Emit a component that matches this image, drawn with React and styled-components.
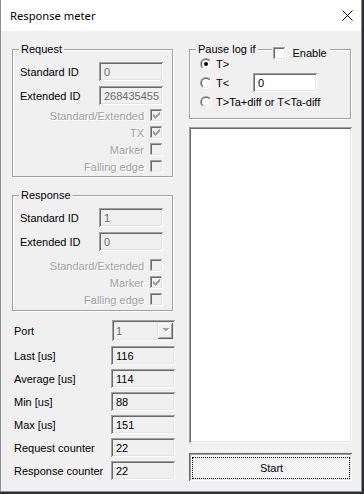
import React from 'react';
import styled, { createGlobalStyle } from 'styled-components';

const GlobalStyle = createGlobalStyle`
  html, body { margin: 0; padding: 0; background: #2e2f33; }
  body { font-family: "Liberation Sans", Arial, sans-serif; font-size: 11px; color: #000; }
  * { box-sizing: border-box; }
`;

const sunken = `
  box-shadow: inset 1px 1px 0 #a0a0a0, inset -1px -1px 0 #ffffff,
    inset 2px 2px 0 #696969, inset -2px -2px 0 #e3e3e3;
`;

const Window = styled.div`
  width: 362px;
  height: 492px;
  display: flex;
  flex-direction: column;
  border: 1px solid #8e8e8e;
  border-top: 0;
  background: #f0f0f0;
`;

const TitleBar = styled.div`
  height: 31px;
  flex: none;
  display: flex;
  align-items: center;
  justify-content: space-between;
  padding: 0 8px 0 9px;
  background: #fff;
  font-family: "Noto Sans", "Open Sans", sans-serif;
  font-size: 11.2px;
`;

const Client = styled.div`
  flex: 1;
  display: flex;
  gap: 14px;
  padding: 12px 9px 10px 11px;
`;

const Column = styled.div`
  width: 163px;
  display: flex;
  flex-direction: column;
`;

const GroupBox = styled.fieldset`
  margin: ${(p) => p.$mt || 0}px 0 0 0;
  min-width: 0;
  width: ${(p) => p.$w}px;
  padding: ${(p) => p.$pt}px ${(p) => p.$pr}px ${(p) => p.$pb}px ${(p) => p.$pl}px;
  border: 1px solid #a0a0a0;
  box-shadow: 1px 1px 0 #fff, inset 1px 1px 0 #fff;
`;

const Legend = styled.legend`
  padding: 0 2px;
  margin-left: ${(p) => p.$ml}px;
  line-height: 13px;
  background: #f0f0f0;
`;

const FieldRow = styled.div`
  display: flex;
  align-items: center;
  justify-content: space-between;
  height: 19px;
  & + & { margin-top: 5px; }
`;

const Edit = styled.div`
  width: ${(p) => p.$w || 64}px;
  height: 19px;
  flex: none;
  display: flex;
  align-items: center;
  padding: 0 4px 0 5px;
  background: ${(p) => (p.$white ? '#fff' : '#f0f0f0')};
  color: ${(p) => (p.$disabled ? '#6d6d6d' : '#000')};
  ${sunken}
`;

const Checks = styled.div`
  margin-top: ${(p) => p.$mt}px;
`;

const CheckRow = styled.div`
  display: flex;
  justify-content: flex-end;
  align-items: center;
  gap: 6px;
  height: 17px;
  color: #a0a0a0;
  text-shadow: 1px 1px 0 #fff;
`;

const BoxSvg = styled.svg`
  flex: none;
  display: block;
`;

const StatRow = styled.div`
  display: flex;
  align-items: center;
  justify-content: space-between;
  height: ${(p) => p.$h || 19}px;
  margin-top: ${(p) => p.$mt}px;
  padding-left: 2px;
`;

const Combo = styled.div`
  width: 63px;
  height: 21px;
  display: flex;
  align-items: center;
  justify-content: space-between;
  padding: 0 2px 0 4px;
  color: #6d6d6d;
  background: #f0f0f0;
  ${sunken}
`;

const DropButton = styled.div`
  width: 16px;
  height: 17px;
  display: flex;
  align-items: center;
  justify-content: center;
  background: #f0f0f0;
  box-shadow: inset 1px 1px 0 #e3e3e3, inset -1px -1px 0 #696969,
    inset 2px 2px 0 #fff, inset -2px -2px 0 #a0a0a0;
`;

const LegendInner = styled.span`
  display: flex;
  align-items: flex-start;
  height: 13px;
`;

const LegendLine = styled.span`
  width: 14px;
  height: 1px;
  margin: 6px 1px 0 3px;
  background: #a0a0a0;
  box-shadow: 0 1px 0 #fff;
`;

const EnableWrap = styled.span`
  position: relative;
  top: 4px;
  display: flex;
  align-items: center;
  gap: 6px;
  height: 13px;
  padding-right: 1px;
`;

const RadioList = styled.div`
  margin-top: -2px;
`;

const RadioRow = styled.div`
  display: flex;
  align-items: center;
  height: 19px;
`;

const RadioLabel = styled.label`
  display: flex;
  align-items: center;
  gap: 4px;
  width: ${(p) => (p.$w ? `${p.$w}px` : 'auto')};
`;

const ListBox = styled.div`
  flex: 1;
  margin-top: 8px;
  background: #fff;
  ${sunken}
`;

const StartButton = styled.button`
  margin-top: 10px;
  height: 28px;
  padding: 4px 2px 2px 3px;
  border: 0;
  display: flex;
  font: inherit;
  color: #000;
  background: conic-gradient(#fff 25%, #e9e9e9 0 50%, #fff 0 75%, #e9e9e9 0) 0 0 / 2px 2px;
  box-shadow: inset 1px 1px 0 #696969, inset -1px -1px 0 #fff,
    inset 2px 2px 0 #a0a0a0, inset -2px -2px 0 #e3e3e3;
`;

const FocusRect = styled.span`
  flex: 1;
  display: flex;
  align-items: center;
  justify-content: center;
  border: 1px dotted #000;
  padding-left: 1px;
`;

const CHECK = ['......X', '.....XX', 'X...XXX', 'XX.XXX.', 'XXXXX..', '.XXX...', '..X....'];

const CheckBox = ({ checked, disabled }) => (
  <BoxSvg width="13" height="13" viewBox="0 0 13 13" shapeRendering="crispEdges">
    <rect x="0" y="0" width="13" height="13" fill="#fff" />
    <rect x="0" y="0" width="12" height="1" fill="#a0a0a0" />
    <rect x="0" y="0" width="1" height="12" fill="#a0a0a0" />
    <rect x="1" y="1" width="10" height="1" fill="#696969" />
    <rect x="1" y="1" width="1" height="10" fill="#696969" />
    <rect x="1" y="11" width="11" height="1" fill="#e3e3e3" />
    <rect x="11" y="1" width="1" height="11" fill="#e3e3e3" />
    <rect x="2" y="2" width="9" height="9" fill={disabled ? '#f0f0f0' : '#fff'} />
    {checked &&
      CHECK.flatMap((row, y) =>
        row.split('').map((c, x) =>
          c === 'X' ? (
            <rect key={`${x}-${y}`} x={x + 3} y={y + 3} width="1" height="1" fill={disabled ? '#a0a0a0' : '#000'} />
          ) : null
        )
      )}
  </BoxSvg>
);

const Radio = ({ checked }) => (
  <BoxSvg width="12" height="12" viewBox="0 0 12 12">
    <defs>
      <linearGradient id="rdo" x1="0" y1="0" x2="1" y2="1">
        <stop offset="0.5" stopColor="#a0a0a0" />
        <stop offset="0.5" stopColor="#ffffff" />
      </linearGradient>
      <linearGradient id="rdi" x1="0" y1="0" x2="1" y2="1">
        <stop offset="0.5" stopColor="#696969" />
        <stop offset="0.5" stopColor="#e3e3e3" />
      </linearGradient>
    </defs>
    <circle cx="6" cy="6" r="6" fill="url(#rdo)" />
    <circle cx="6" cy="6" r="5" fill="url(#rdi)" />
    <circle cx="6" cy="6" r="4" fill="#fff" />
    {checked && <circle cx="6" cy="6" r="2" fill="#000" />}
  </BoxSvg>
);

const CloseIcon = () => (
  <svg width="11" height="11" viewBox="0 0 11 11">
    <path d="M0.5 0.5 L10.5 10.5 M10.5 0.5 L0.5 10.5" stroke="#000" strokeWidth="1" fill="none" />
  </svg>
);

const IdGroup = ({ title, std, ext, checks, mt, checksTop, pb }) => (
  <GroupBox $w={161} $mt={mt} $pt={6} $pr={9} $pb={pb} $pl={7}>
    <Legend $ml={-1}>{title}</Legend>
    <FieldRow>
      <span>Standard ID</span>
      <Edit $disabled>{std}</Edit>
    </FieldRow>
    <FieldRow>
      <span>Extended ID</span>
      <Edit $disabled>{ext}</Edit>
    </FieldRow>
    <Checks $mt={checksTop}>
      {checks.map(([label, on]) => (
        <CheckRow key={label}>
          <span>{label}</span>
          <CheckBox checked={on} disabled />
        </CheckRow>
      ))}
    </Checks>
  </GroupBox>
);

const stats = [
  ['Last [us]', '116'],
  ['Average [us]', '114'],
  ['Min [us]', '88'],
  ['Max [us]', '151'],
  ['Request counter', '22'],
  ['Response counter', '22'],
];

export default function App() {
  return (
    <>
      <GlobalStyle />
      <Window>
        <TitleBar>
          <span>Response meter</span>
          <CloseIcon />
        </TitleBar>
        <Client>
          <Column>
            <IdGroup
              title="Request"
              std="0"
              ext="268435455"
              checksTop={2}
              pb={1}
              checks={[
                ['Standard/Extended', true],
                ['TX', true],
                ['Marker', false],
                ['Falling edge', false],
              ]}
            />
            <IdGroup
              title="Response"
              std="1"
              ext="0"
              mt={12}
              checksTop={6}
              pb={2}
              checks={[
                ['Standard/Extended', false],
                ['Marker', true],
                ['Falling edge', false],
              ]}
            />
            <StatRow $h={21} $mt={9}>
              <span>Port</span>
              <Combo>
                <span>1</span>
                <DropButton>
                  <svg width="7" height="5" viewBox="0 0 7 5" shapeRendering="crispEdges">
                    <path d="M1 1 H8 L4.5 4.5 Z" fill="#fff" />
                    <path d="M0 0 H7 L3.5 3.5 Z" fill="#a0a0a0" />
                  </svg>
                </DropButton>
              </Combo>
            </StatRow>
            {stats.map(([label, value], i) => (
              <StatRow key={label} $mt={i === 0 ? 5 : 4}>
                <span>{label}</span>
                <Edit>{value}</Edit>
              </StatRow>
            ))}
          </Column>
          <Column>
            <GroupBox $w={162} $pt={0} $pr={8} $pb={7} $pl={10}>
              <Legend $ml={-4}>
                <LegendInner>
                  <span>Pause log if</span>
                  <LegendLine />
                  <EnableWrap>
                    <CheckBox />
                    <span>Enable</span>
                  </EnableWrap>
                </LegendInner>
              </Legend>
              <RadioList>
                <RadioRow>
                  <RadioLabel>
                    <Radio checked />
                    T&gt;
                  </RadioLabel>
                </RadioRow>
                <RadioRow>
                  <RadioLabel $w={53}>
                    <Radio />
                    T&lt;
                  </RadioLabel>
                  <Edit $white>0</Edit>
                </RadioRow>
                <RadioRow>
                  <RadioLabel>
                    <Radio />
                    T&gt;Ta+diff or T&lt;Ta-diff
                  </RadioLabel>
                </RadioRow>
              </RadioList>
            </GroupBox>
            <ListBox />
            <StartButton>
              <FocusRect>Start</FocusRect>
            </StartButton>
          </Column>
        </Client>
      </Window>
    </>
  );
}
